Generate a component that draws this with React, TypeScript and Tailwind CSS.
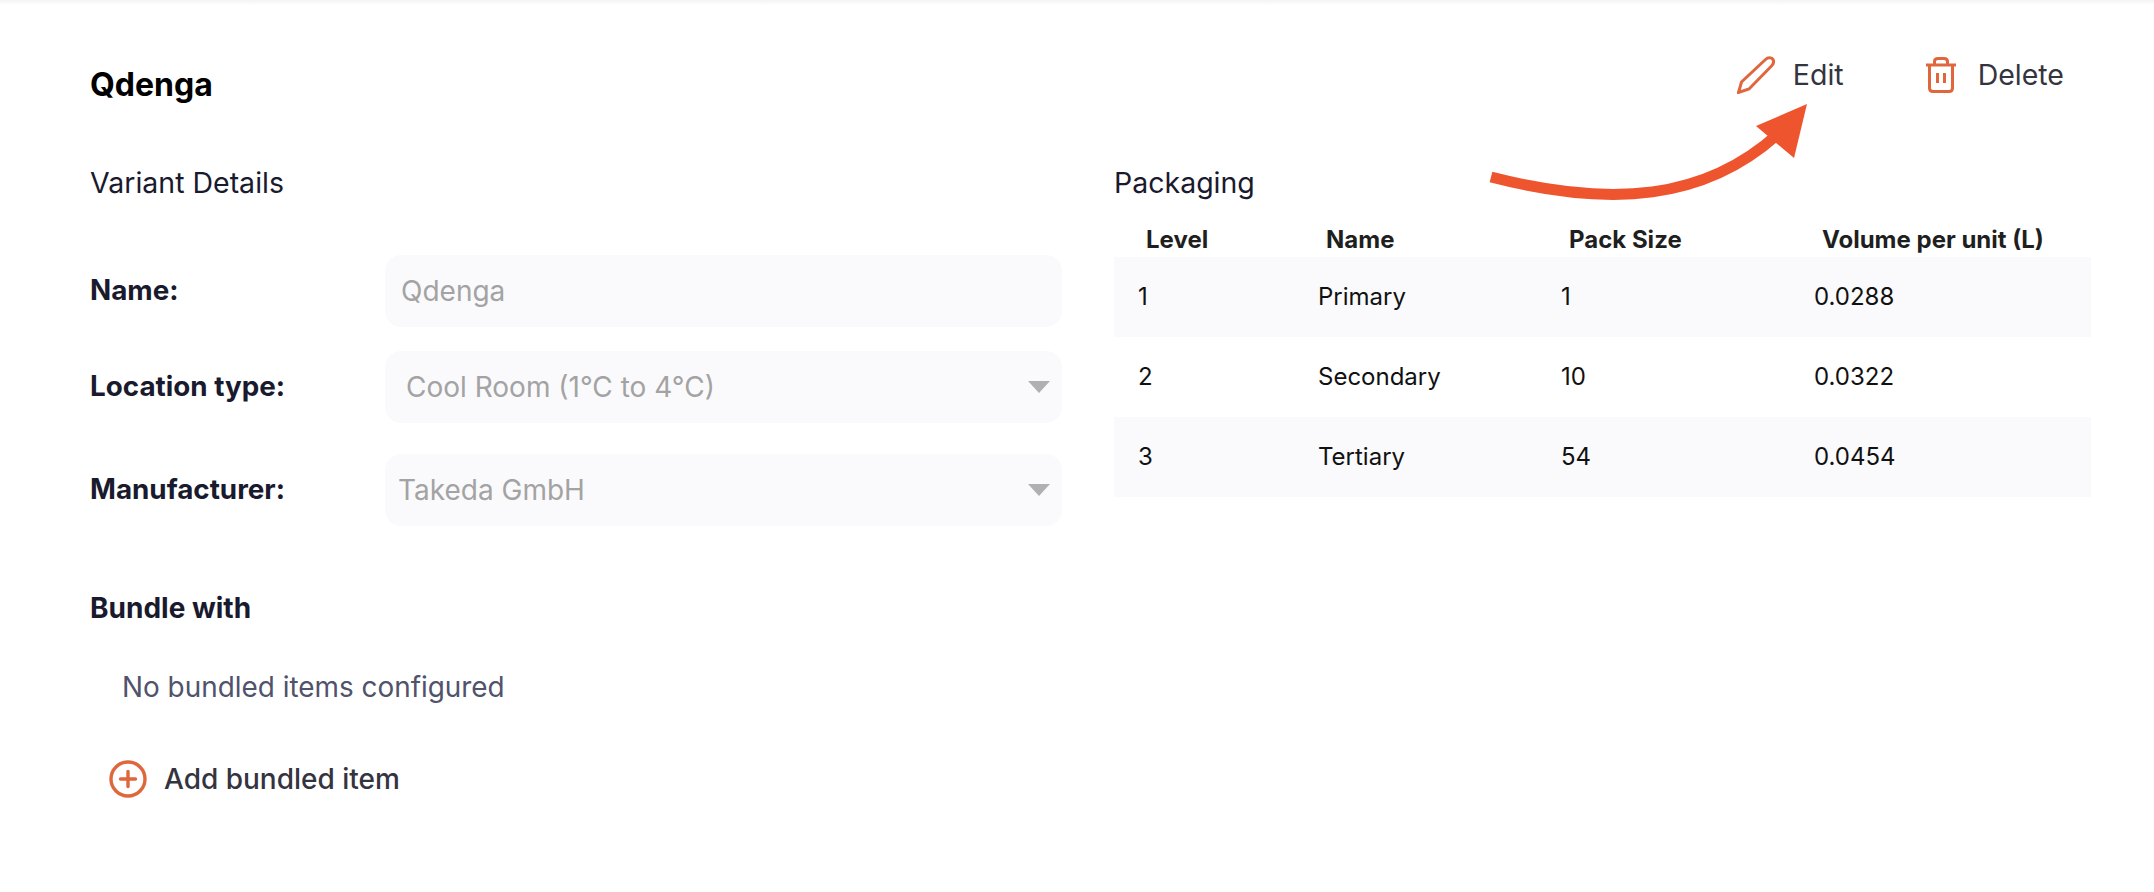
const inter = "font-['Inter',sans-serif]";

function Pencil() {
  return (
    <svg width="38" height="38" viewBox="0 0 38 38" fill="none" stroke="#e0663d" strokeWidth="3" strokeLinejoin="miter" strokeLinecap="round">
      <path d="M1.5 36.5 L4.5 26 L28.5 3.5 C31 1 35 1.5 36 3.5 C37.2 6 36.6 8 34.5 10 L12 33 Z" />
    </svg>
  );
}

function Trash() {
  return (
    <svg width="30" height="37" viewBox="0 0 30 37" fill="none" stroke="#e0663d" strokeWidth="3">
      <path d="M0 8 H30" />
      <path d="M8.5 8 V4.5 C8.5 2.5 10 1.5 12 1.5 H18 C20 1.5 21.5 2.5 21.5 4.5 V8" />
      <path d="M3.5 8 V31 C3.5 33.5 5 34.5 7 34.5 H23 C25 34.5 26.5 33.5 26.5 31 V8" />
      <path d="M11.5 16 V26 M18.5 16 V26" />
    </svg>
  );
}

function Field({ label, value, select, textPad }: { label: string; value: string; select?: boolean; textPad: string }) {
  return (
    <div className="flex items-center">
      <div className="w-[295px] shrink-0 text-[27.8px] font-bold text-[#1a1a2e]">{label}</div>
      <div className={`flex h-[72px] w-[677px] items-center justify-between rounded-[16px] bg-[#fafafc] text-[28px] text-[#a3a3a3] ${textPad}`}>
        <span>{value}</span>
        {select && (
          <svg width="22" height="12" viewBox="0 0 22 12" className="mr-[12px]">
            <path d="M0 0 H22 L11 12 Z" fill="#b0b0b0" />
          </svg>
        )}
      </div>
    </div>
  );
}

const rows = [
  ["1", "Primary", "1", "0.0288"],
  ["2", "Secondary", "10", "0.0322"],
  ["3", "Tertiary", "54", "0.0454"],
];

export default function App() {
  return (
    <div className={`relative h-[892px] w-[2154px] overflow-hidden bg-white ${inter}`}>
      <div className="h-[5px] bg-gradient-to-b from-[#f3f3f3] to-white" />
      <div className="flex items-start justify-between pl-[90px] pr-[90px] pt-[50px]">
        <h1 className="mt-[8px] text-[32px] font-bold leading-[44px] text-black">Qdenga</h1>
        <div className="flex items-center gap-[82px] text-[28.5px] leading-[40px] text-[#34343f]">
          <div className="flex items-center gap-[18px]"><Pencil />Edit</div>
          <div className="flex items-center gap-[22px]"><Trash />Delete</div>
        </div>
      </div>
      <div className="mt-[56px] flex pl-[90px]">
        <div className="w-[1024px] shrink-0">
          <h2 className="text-[28.5px] leading-[40px] text-[#1a1a2e]">Variant Details</h2>
          <div className="mt-[52px] flex flex-col">
            <Field label="Name:" value="Qdenga" textPad="pl-[16px]" />
            <div className="mt-[24px]"><Field label="Location type:" value="Cool Room (1°C to 4°C)" select textPad="pl-[21px]" /></div>
            <div className="mt-[31px]"><Field label="Manufacturer:" value="Takeda GmbH" select textPad="pl-[13px]" /></div>
          </div>
          <h3 className="mt-[62px] text-[28px] font-bold leading-[40px] text-[#1a1a2e]">Bundle with</h3>
          <p className="ml-[32px] mt-[39px] text-[27.9px] leading-[40px] text-[#50536b]">No bundled items configured</p>
          <div className="ml-[19px] mt-[52px] flex items-center gap-[17px] text-[28px] font-medium leading-[40px] text-[#34343f]">
            <svg width="38" height="38" viewBox="0 0 38 38" fill="none" stroke="#e0663d" strokeWidth="3.4" strokeLinecap="round">
              <circle cx="19" cy="19" r="17" />
              <path d="M19 11.5 V26.5 M11.5 19 H26.5" />
            </svg>
            Add bundled item
          </div>
        </div>
        <div className="w-[977px] shrink-0">
          <h2 className="text-[28.5px] leading-[40px] text-[#1a1a2e]">Packaging</h2>
          <div className="mt-[19px] flex h-[35px] items-center text-[24px] font-bold text-[#1f1f1f]">
            <div className="w-[180px] pl-[32px]">Level</div>
            <div className="w-[243px] pl-[32px]">Name</div>
            <div className="w-[253px] pl-[32px]">Pack Size</div>
            <div className="pl-[32px]">Volume per unit (L)</div>
          </div>
          {rows.map((r, i) => (
            <div key={r[0]} className={`flex h-[80px] items-center text-[24px] text-[#111111] ${i % 2 === 0 ? "bg-[#fafafc]" : "bg-white"}`}>
              <div className="w-[180px] pl-[24px]">{r[0]}</div>
              <div className="w-[243px] pl-[24px]">{r[1]}</div>
              <div className="w-[253px] pl-[24px]">{r[2]}</div>
              <div className="pl-[24px]">{r[3]}</div>
            </div>
          ))}
        </div>
      </div>
      <svg className="absolute left-0 top-0" width="2154" height="892" fill="none">
        <path d="M1491 177 C1612 208 1705 200 1778 134" stroke="#ee542e" strokeWidth="11" />
        <path d="M1807 104 L1756 126 L1794 158 Z" fill="#ee542e" />
      </svg>
    </div>
  );
}
